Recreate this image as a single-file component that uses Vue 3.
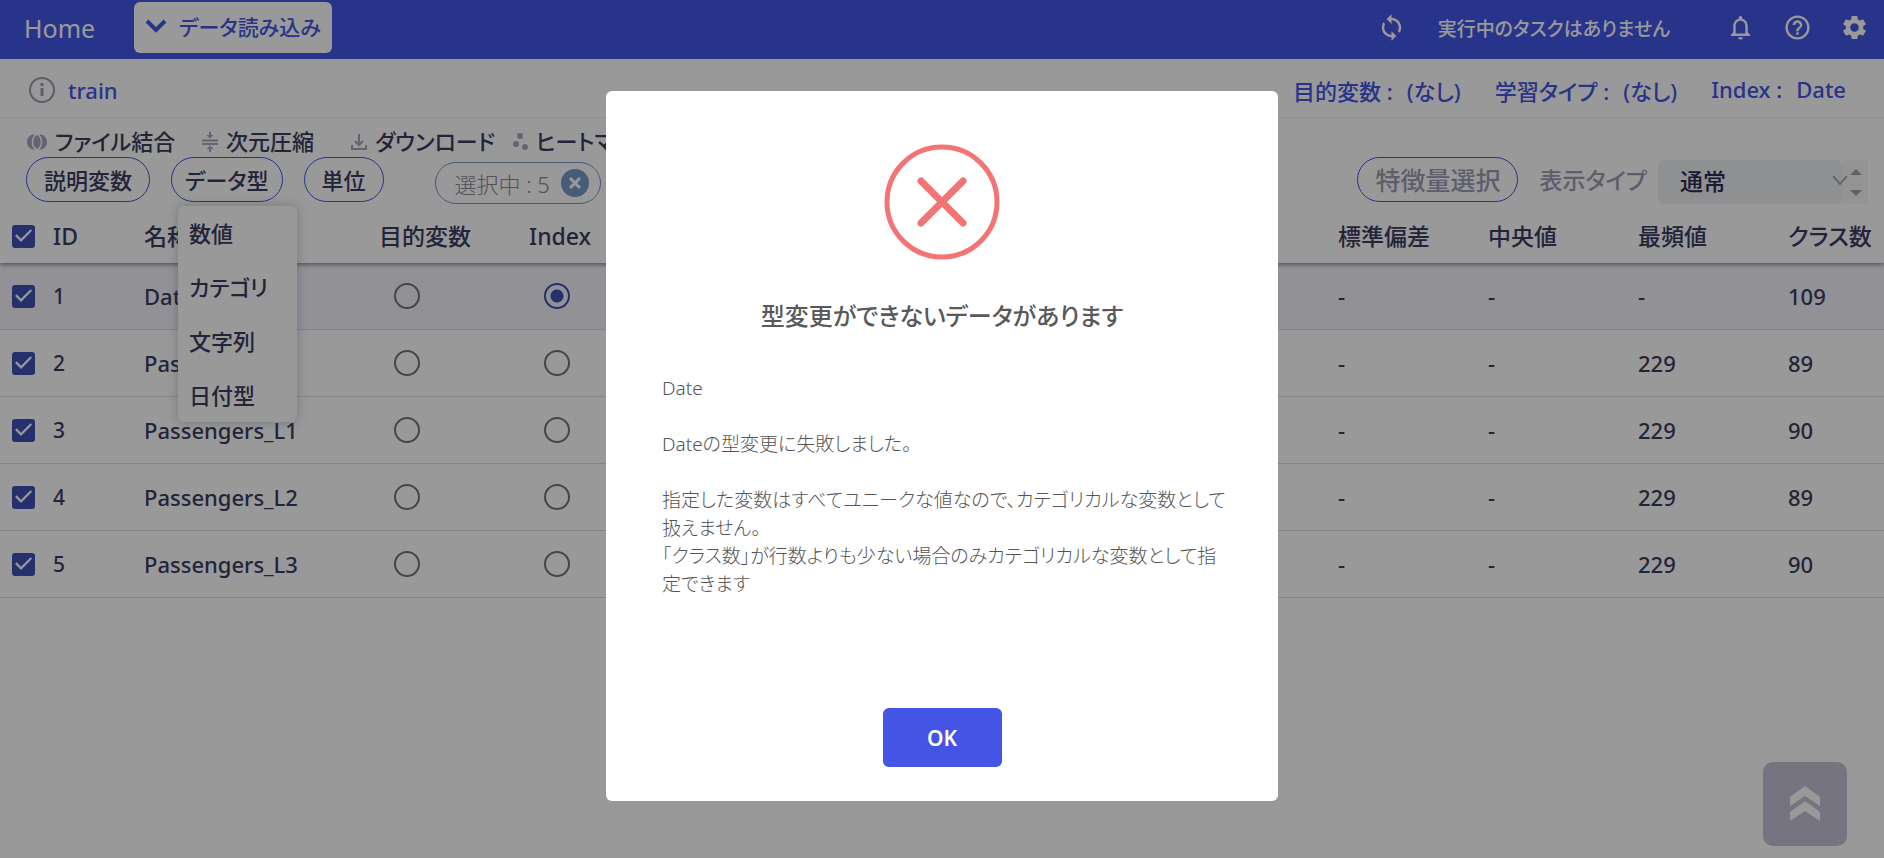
<template>
    <div class="page">
        <header class="topbar">
            <a class="home" href="#">Home</a>
            <button class="botao-load" type="button">
                <svg width="22" height="14" viewBox="0 0 22 14"><path d="M2 2l9 9 9-9" fill="none" stroke="currentColor" stroke-width="4" /></svg>
                データ読み込み
            </button>
            <div class="status">
                <svg class="icon" viewBox="0 0 24 24"><path d="M12 4V1L8 5l4 4V6c3.31 0 6 2.69 6 6 0 1.01-.25 1.97-.7 2.8l1.46 1.46C19.54 15.03 20 13.57 20 12c0-4.42-3.58-8-8-8zm0 14c-3.31 0-6-2.69-6-6 0-1.01.25-1.97.7-2.8L5.24 7.74C4.46 8.97 4 10.43 4 12c0 4.42 3.58 8 8 8v3l4-4-4-4v3z" /></svg>
                <span class="task">実行中のタスクはありません</span>
                <button class="icon-btn" type="button" aria-label="通知">
                    <svg class="icon" viewBox="0 0 24 24"><path d="M12 22c1.1 0 2-.9 2-2h-4c0 1.1.9 2 2 2zm6-6v-5c0-3.07-1.63-5.64-4.5-6.32V4c0-.83-.67-1.5-1.5-1.5s-1.5.67-1.5 1.5v.68C7.64 5.36 6 7.92 6 11v5l-2 2v1h16v-1l-2-2zm-2 1H8v-6c0-2.48 1.51-4.5 4-4.5s4 2.02 4 4.5v6z" /></svg>
                </button>
                <button class="icon-btn" type="button" aria-label="ヘルプ">
                    <svg class="icon" viewBox="0 0 24 24"><path d="M11 18h2v-2h-2v2zm1-16C6.48 2 2 6.48 2 12s4.48 10 10 10 10-4.48 10-10S17.52 2 12 2zm0 18c-4.41 0-8-3.59-8-8s3.59-8 8-8 8 3.59 8 8-3.59 8-8 8zm0-14c-2.21 0-4 1.79-4 4h2c0-1.1.9-2 2-2s2 .9 2 2c0 2-3 1.75-3 5h2c0-2.25 3-2.5 3-5 0-2.21-1.79-4-4-4z" /></svg>
                </button>
                <button class="icon-btn" type="button" aria-label="設定">
                    <svg class="icon" viewBox="0 0 24 24"><path d="M19.14 12.94c.04-.3.06-.61.06-.94 0-.32-.02-.64-.07-.94l2.03-1.58c.18-.14.23-.41.12-.61l-1.92-3.32c-.12-.22-.37-.29-.59-.22l-2.39.96c-.5-.38-1.03-.7-1.62-.94l-.36-2.54c-.04-.24-.24-.41-.48-.41h-3.84c-.24 0-.43.17-.47.41l-.36 2.54c-.59.24-1.13.57-1.62.94l-2.39-.96c-.22-.08-.47 0-.59.22L2.74 8.87c-.12.21-.08.47.12.61l2.03 1.58c-.05.3-.09.63-.09.94s.02.64.07.94l-2.03 1.58c-.18.14-.23.41-.12.61l1.92 3.32c.12.22.37.29.59.22l2.39-.96c.5.38 1.03.7 1.62.94l.36 2.54c.05.24.24.41.48.41h3.84c.24 0 .44-.17.47-.41l.36-2.54c.59-.24 1.13-.56 1.62-.94l2.39.96c.22.08.47 0 .59-.22l1.92-3.32c.12-.22.07-.47-.12-.61l-2.01-1.58zM12 15.6c-1.98 0-3.6-1.62-3.6-3.6s1.62-3.6 3.6-3.6 3.6 1.62 3.6 3.6-1.62 3.6-3.6 3.6z" /></svg>
                </button>
            </div>
        </header>

        <div class="infobar">
            <svg class="info-icon" width="28" height="28" viewBox="0 0 28 28">
                <circle cx="14" cy="14" r="12" fill="none" stroke="currentColor" stroke-width="2" />
                <path d="M14 12v8M14 7v3" stroke="currentColor" stroke-width="3" />
            </svg>
            <a class="file" href="#">train</a>
            <dl class="summary">
                <div v-for="item in summary" :key="item.label">
                    <dt>{{ item.label }} :</dt>
                    <dd>{{ item.value }}</dd>
                </div>
            </dl>
        </div>

        <div class="tools">
            <button class="tool" type="button">
                <svg width="20" height="20" viewBox="0 0 20 20" fill="currentColor">
                    <path d="M8 2.500C3.500 2 0 5.500 0 10s3.500 8 8 7.500C5.500 15.500 4.800 13 4.800 10S5.500 4.500 8 2.500z" />
                    <path d="M12 2.500c4.500-.5 8 3 8 7.500s-3.500 8-8 7.500c2.500-2 3.200-4.500 3.200-7.500S14.500 4.500 12 2.500z" />
                    <path d="M10 3C7.500 4.500 6.300 7 6.300 10s1.200 5.500 3.700 7c2.500-1.500 3.700-4 3.700-7S12.500 4.500 10 3z" />
                </svg>
                ファイル結合
            </button>
            <button class="tool" type="button">
                <svg width="16" height="20" viewBox="0 0 16 20">
                    <path d="M0 8.500h16M0 12h16M8 0v4M8 20v-4" stroke="currentColor" stroke-width="2" />
                    <path d="M4.500 3h7L8 6.500zM4.500 17h7L8 13.500z" fill="currentColor" />
                </svg>
                次元圧縮
            </button>
            <button class="tool" type="button">
                <svg width="16" height="18" viewBox="0 0 16 18"><path d="M8 1v11M4 8l4 4 4-4M1 12v4h14v-4" fill="none" stroke="currentColor" stroke-width="2" /></svg>
                ダウンロード
            </button>
            <button class="tool" type="button">
                <svg width="16" height="20" viewBox="0 0 16 20" fill="currentColor">
                    <circle cx="8" cy="4" r="3" />
                    <circle cx="4" cy="12" r="3" />
                    <circle cx="13" cy="15" r="3" />
                </svg>
                ヒートマップ
            </button>
        </div>

        <div class="filters">
            <button class="pill" type="button">説明変数</button>
            <div class="menu-anchor">
                <button class="pill" type="button" aria-haspopup="true">データ型</button>
                <ul class="menu">
                    <li v-for="tipo in tipos" :key="tipo"><button type="button">{{ tipo }}</button></li>
                </ul>
            </div>
            <button class="pill" type="button">単位</button>
            <div class="chip">
                選択中 : {{ selectedCount }}
                <button class="chip-clear" type="button" aria-label="選択解除">
                    <svg width="14" height="14" viewBox="0 0 14 14"><path d="M2 2l10 10M12 2L2 12" stroke="#fff" stroke-width="3" /></svg>
                </button>
            </div>
            <button class="pill feature" type="button">特徴量選択</button>
            <label class="display-label" for="display">表示タイプ</label>
            <div class="display">
                <select id="display">
                    <option>通常</option>
                </select>
                <svg class="arrow" width="18" height="12" viewBox="0 0 18 12"><path d="M2 2l7 8 7-8" fill="none" stroke="#a9abb8" stroke-width="2" /></svg>
                <span class="spin"></span>
            </div>
        </div>

        <table class="grid">
            <colgroup>
                <col class="c-check"><col class="c-id"><col class="c-name"><col class="c-num"><col class="c-num">
                <col><col class="c-num"><col class="c-num"><col class="c-num"><col class="c-last">
            </colgroup>
            <thead>
                <tr>
                    <th class="check"><input type="checkbox" v-model="all" aria-label="すべて選択"></th>
                    <th>ID</th>
                    <th>名称</th>
                    <th>目的変数</th>
                    <th>Index</th>
                    <th></th>
                    <th>標準偏差</th>
                    <th>中央値</th>
                    <th>最頻値</th>
                    <th>クラス数</th>
                </tr>
            </thead>
            <tbody>
                <tr v-for="row in rows" :key="row.id" :class="{ active: row.id === index }">
                    <td class="check"><input type="checkbox" v-model="row.checked" :aria-label="row.name"></td>
                    <td class="id">{{ row.id }}</td>
                    <td>{{ row.name }}</td>
                    <td class="radio"><input type="radio" name="target" :value="row.id" v-model="target" :aria-label="row.name"></td>
                    <td class="radio"><input type="radio" name="index" :value="row.id" v-model="index" :aria-label="row.name"></td>
                    <td></td>
                    <td>-</td>
                    <td>-</td>
                    <td>{{ row.mode }}</td>
                    <td>{{ row.classes }}</td>
                </tr>
            </tbody>
        </table>

        <button class="to-top" type="button" aria-label="トップへ戻る" @click="scrollToTop">
            <svg width="30" height="36" viewBox="0 0 30 36" fill="#fff">
                <path d="M0 11L15 0l15 11v9L15 10 0 20z" />
                <path d="M0 26l15-11 15 11v9L15 25 0 35z" />
            </svg>
        </button>

        <div v-if="open" class="overlay">
            <div class="modal" role="alertdialog" aria-labelledby="modal-title">
                <svg class="error-icon" width="116" height="116" viewBox="0 0 116 116" fill="none" stroke="#f27474">
                    <circle cx="58" cy="58" r="55" stroke-width="5" />
                    <path d="M37 37l42 42M79 37L37 79" stroke-width="7" stroke-linecap="round" />
                </svg>
                <h2 id="modal-title">型変更ができないデータがあります</h2>
                <div class="message">
                    <p>Date</p>
                    <p>Dateの型変更に失敗しました。</p>
                    <p>指定した変数はすべてユニークな値なので、カテゴリカルな変数として<br>扱えません。<br>「クラス数」が行数よりも少ない場合のみカテゴリカルな変数として指<br>定できます</p>
                </div>
                <button class="ok" type="button" @click="open = false">OK</button>
            </div>
        </div>
    </div>
</template>

<script setup>
import { ref, computed } from 'vue';

const open = ref(true)
const target = ref(null)
const index = ref(1)

const tipos = ['数値', 'カテゴリ', '文字列', '日付型']

const summary = [
    { label: '目的変数', value: '(なし)' },
    { label: '学習タイプ', value: '(なし)' },
    { label: 'Index', value: 'Date' },
]

const rows = ref([
    { id: 1, name: 'Date', mode: '-', classes: 109, checked: true },
    { id: 2, name: 'Passengers', mode: 229, classes: 89, checked: true },
    { id: 3, name: 'Passengers_L1', mode: 229, classes: 90, checked: true },
    { id: 4, name: 'Passengers_L2', mode: 229, classes: 89, checked: true },
    { id: 5, name: 'Passengers_L3', mode: 229, classes: 90, checked: true },
])

const selectedCount = computed(() => rows.value.filter(r => r.checked).length)

const all = computed({
    get: () => rows.value.every(r => r.checked),
    set: (v) => rows.value.forEach(r => { r.checked = v }),
})

function scrollToTop() {
    window.scrollTo({ top: 0, behavior: 'smooth' })
}
</script>

<style>
body {
    margin: 0;
    background: #fff;
}
</style>

<style scoped>
.page {
    min-height: 100vh;
    font-family: "Noto Sans", "Noto Sans CJK JP", sans-serif;
    font-feature-settings: "palt";
    font-size: 22px;
    font-weight: 500;
    color: #3b3c62;
}

.page * {
    box-sizing: border-box;
}

button,
select {
    font: inherit;
    font-feature-settings: inherit;
    color: inherit;
    margin: 0;
    padding: 0;
    border: 0;
    background: none;
    white-space: nowrap;
    cursor: pointer;
}

a {
    color: inherit;
    text-decoration: none;
}

.topbar {
    display: flex;
    align-items: center;
    height: 59px;
    padding: 0 15px 4px 24px;
    background: #4455e6;
    color: #fff;
}

.home {
    width: 110px;
    font-size: 25px;
    font-weight: 400;
}

.botao-load {
    display: flex;
    align-items: center;
    gap: 12px;
    height: 51px;
    padding: 0 11px 3px;
    border-radius: 6px;
    background: #fff;
    font-size: 21px;
    color: #4455e6;
}

.status {
    display: flex;
    align-items: center;
    gap: 28px;
    margin-left: auto;
}

.task {
    margin: 0 28px 0 4px;
    font-size: 19px;
}

.icon {
    display: block;
    width: 29px;
    height: 29px;
    fill: #fff;
}

.infobar {
    display: flex;
    align-items: center;
    height: 59px;
    padding: 3px 38px 0 28px;
    border-bottom: 1px solid #eeeeee;
    color: #4455e6;
}

.info-icon {
    margin-right: 12px;
    color: #9a9bb2;
}

.summary {
    display: flex;
    gap: 34px;
    margin: 0 0 0 auto;
}

.summary div {
    display: flex;
    gap: 14px;
}

.summary dd {
    margin: 0;
}

.tools {
    display: grid;
    grid-template-columns: 175px 149px 161px auto;
    padding: 9px 0 0 27px;
}

.tool {
    display: flex;
    align-items: center;
    gap: 8px;
    height: 29px;
    line-height: 29px;
}

.tool svg {
    flex: none;
    color: #a5a6c0;
}

.filters {
    display: flex;
    align-items: flex-start;
    height: 48px;
    padding: 1px 16px 0 26px;
}

.pill {
    display: block;
    height: 45px;
    margin-right: 21px;
    padding: 0 17px;
    border: 1px solid #4455e6;
    border-radius: 23px;
    line-height: 42px;
}

.menu-anchor {
    position: relative;
}

.menu-anchor .pill {
    padding: 0 13px;
}

.menu {
    position: absolute;
    top: 49px;
    left: 7px;
    width: 119px;
    margin: 0;
    padding: 0;
    list-style: none;
    border-radius: 6px;
    background: #fff;
    box-shadow: 0 0 12px rgba(70, 90, 120, 0.35);
    z-index: 2;
}

.menu button {
    display: block;
    width: 100%;
    height: 54px;
    padding: 0 0 2px 11px;
    text-align: left;
}

.chip {
    display: flex;
    align-items: center;
    gap: 11px;
    height: 42px;
    margin: 5px 0 0 30px;
    padding: 0 11px 0 19px;
    border: 1px solid #7799c8;
    border-radius: 21px;
    font-weight: 300;
    color: #858a98;
}

.chip-clear {
    display: flex;
    align-items: center;
    justify-content: center;
    width: 28px;
    height: 28px;
    border-radius: 50%;
    background: #7799c8;
}

.feature {
    margin-left: auto;
    font-size: 25px;
    color: #9c9cb4;
}

.display-label {
    margin-right: 11px;
    font-size: 23px;
    line-height: 46px;
    color: #9c9cb4;
}

.display {
    position: relative;
    display: flex;
    height: 44px;
    margin-top: 3px;
}

.display select {
    appearance: none;
    width: 185px;
    padding: 0 0 3px 22px;
    border-radius: 6px;
    background: #edf0f4;
    font-size: 23px;
    color: #2c2d52;
}

.arrow {
    position: absolute;
    top: 14px;
    right: 19px;
    z-index: 1;
}

.spin {
    display: flex;
    flex-direction: column;
    align-items: center;
    justify-content: center;
    gap: 15px;
    width: 25px;
    background: #f6f6f6;
}

.spin::before,
.spin::after {
    content: "";
    border: 6px solid transparent;
}

.spin::before {
    border-top: 0;
    border-bottom-color: #a0a0a0;
}

.spin::after {
    border-bottom: 0;
    border-top-color: #a0a0a0;
}

.grid {
    width: 100%;
    table-layout: fixed;
    border-collapse: separate;
    border-spacing: 0;
}

.c-check { width: 38px; }
.c-id { width: 91px; }
.c-name { width: 235px; }
.c-num { width: 150px; }
.c-last { width: 111px; }

.grid thead {
    position: relative;
    box-shadow: 0 2px 4px rgba(0, 0, 0, 0.4);
    clip-path: inset(0 0 -8px 0);
}

.grid th {
    height: 59px;
    padding: 5px 0 0 15px;
    text-align: left;
    font-size: 23px;
    font-weight: 500;
    line-height: 30px;
    white-space: nowrap;
    background: #fff;
}

.grid td {
    height: 67px;
    padding: 0 0 0 15px;
    border-bottom: 1px solid #dcdce2;
}

.grid .check {
    padding-left: 12px;
}

.grid .radio {
    padding-left: 30px;
}

.grid .id {
    font-size: 21px;
}

.active {
    background: #f4f3fb;
}

input[type="checkbox"] {
    appearance: none;
    display: block;
    width: 23px;
    height: 23px;
    margin: 0;
    border: 2px solid #3f51b5;
    border-radius: 3px;
}

input[type="checkbox"]:checked {
    background: #3f51b5;
}

input[type="checkbox"]:checked::before {
    content: "";
    display: block;
    width: 19px;
    height: 19px;
    background: #fff;
    clip-path: polygon(6% 50%, 14% 41%, 37% 65%, 87% 14%, 95% 23%, 37% 82%);
}

input[type="radio"] {
    appearance: none;
    display: block;
    width: 26px;
    height: 26px;
    margin: 0;
    border: 2px solid #757575;
    border-radius: 50%;
}

input[type="radio"]:checked {
    border-color: #3f51b5;
    background: radial-gradient(circle, #3f51b5 6px, transparent 7px);
}

.to-top {
    position: fixed;
    right: 37px;
    bottom: 12px;
    display: flex;
    align-items: center;
    justify-content: center;
    width: 84px;
    height: 84px;
    border-radius: 10px;
    background: #c3c1d5;
}

.overlay {
    position: fixed;
    inset: 0;
    display: flex;
    align-items: center;
    justify-content: center;
    padding-top: 34px;
    background: rgba(0, 0, 0, 0.4);
    z-index: 10;
}

.modal {
    display: flex;
    flex-direction: column;
    align-items: center;
    width: 672px;
    padding: 53px 56px 34px;
    border-radius: 6px;
    background: #fff;
    color: #545454;
}

.error-icon {
    display: block;
}

.modal h2 {
    margin: 36px 0 0;
    font-size: 24px;
    font-weight: 500;
    line-height: 40px;
    color: #595959;
    white-space: nowrap;
}

.message {
    align-self: stretch;
    margin-top: 38px;
    font-size: 19px;
    font-weight: 300;
    line-height: 28px;
    white-space: nowrap;
}

.message p {
    margin: 0 0 28px;
}

.ok {
    width: 119px;
    height: 59px;
    margin-top: 82px;
    border-radius: 6px;
    background: #4455e6;
    font-size: 21px;
    font-weight: 600;
    color: #fff;
}
</style>
